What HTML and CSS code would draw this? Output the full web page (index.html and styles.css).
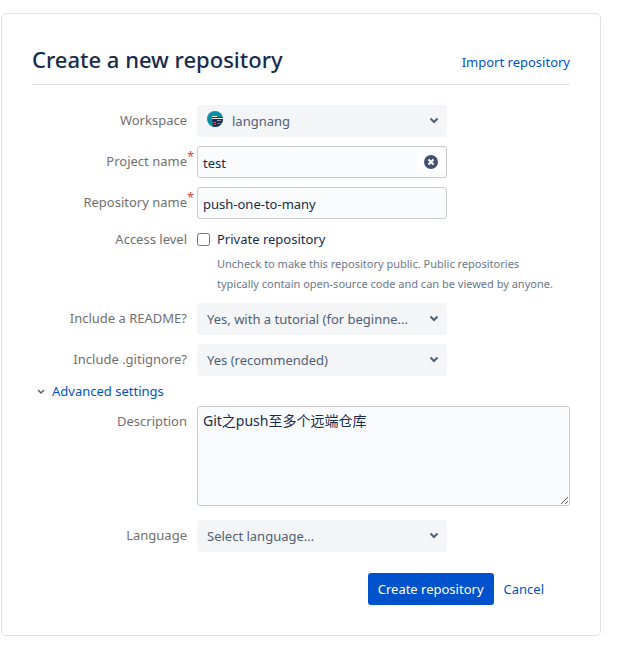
FILE: index.html
```html
<!DOCTYPE html>
<html lang="en">
<head>
<meta charset="utf-8">
<meta name="viewport" content="width=device-width, initial-scale=1">
<title>Create a new repository</title>
<link rel="stylesheet" href="styles.css">
</head>
<body>
<main class="card">
  <header class="card-header">
    <h1>Create a new repository</h1>
    <a href="#import">Import repository</a>
  </header>
  <form class="form">
    <div class="row">
      <label class="row-label" for="workspace">Workspace</label>
      <div class="control">
        <select id="workspace" class="select has-avatar"><option>langnang</option></select>
        <svg class="avatar" viewBox="0 0 16 16" aria-hidden="true">
          <clipPath id="round"><circle cx="8" cy="8" r="8"/></clipPath>
          <g clip-path="url(#round)">
            <path fill="#0891a5" d="M0 0h16v16H0z"/>
            <path fill="#1d2b4f" d="M5 6h11v10H6z"/>
            <path fill="#f3ead8" d="M5 5h5v1H5z"/>
            <path fill="#e9f0f5" d="M5 7h11v1H5z"/>
            <path fill="#8fa3bd" d="M10 9h4v1h-4z"/>
            <path fill="#d9546a" d="M6 11h3v1H6zM7 13h2v1H7z"/>
            <path fill="#5e7896" d="M10 12h4v1h-4z"/>
          </g>
        </svg>
        <svg class="chevron" viewBox="0 0 10 10" aria-hidden="true"><path d="M1.500 3.500 5 7 8.500 3.500"/></svg>
      </div>
    </div>
    <div class="row">
      <label class="row-label required" for="project">Project name</label>
      <div class="control">
        <input id="project" class="field" type="text" value="test">
        <button class="clear" type="button" aria-label="Clear project name">
          <svg viewBox="0 0 14 14" aria-hidden="true"><circle cx="7" cy="7" r="7"/><path d="m4.500 4.500 5 5m0-5-5 5"/></svg>
        </button>
      </div>
    </div>
    <div class="row">
      <label class="row-label required" for="repository">Repository name</label>
      <div class="control">
        <input id="repository" class="field" type="text" value="push-one-to-many">
      </div>
    </div>
    <div class="row row-access" role="group" aria-labelledby="access">
      <span class="row-label" id="access">Access level</span>
      <div class="access">
        <label class="check"><input type="checkbox">Private repository</label>
        <p class="hint">Uncheck to make this repository public. Public repositories<br>typically contain open-source code and can be viewed by anyone.</p>
      </div>
    </div>
    <div class="row">
      <label class="row-label" for="readme">Include a README?</label>
      <div class="control">
        <select id="readme" class="select"><option>Yes, with a tutorial (for beginne...</option></select>
        <svg class="chevron" viewBox="0 0 10 10" aria-hidden="true"><path d="M1.500 3.500 5 7 8.500 3.500"/></svg>
      </div>
    </div>
    <div class="row">
      <label class="row-label" for="gitignore">Include .gitignore?</label>
      <div class="control">
        <select id="gitignore" class="select"><option>Yes (recommended)</option></select>
        <svg class="chevron" viewBox="0 0 10 10" aria-hidden="true"><path d="M1.500 3.500 5 7 8.500 3.500"/></svg>
      </div>
    </div>
    <button class="advanced" type="button" aria-expanded="true">
      <svg viewBox="0 0 10 10" aria-hidden="true"><path d="M2 4 5 7 8 4"/></svg>Advanced settings
    </button>
    <div class="row row-description">
      <label class="row-label" for="description">Description</label>
      <textarea id="description" class="field area">Git之push至多个远端仓库</textarea>
    </div>
    <div class="row row-language">
      <label class="row-label" for="language">Language</label>
      <div class="control">
        <select id="language" class="select"><option>Select language...</option></select>
        <svg class="chevron" viewBox="0 0 10 10" aria-hidden="true"><path d="M1.500 3.500 5 7 8.500 3.500"/></svg>
      </div>
    </div>
    <div class="actions">
      <button class="primary" type="submit">Create repository</button>
      <a href="#cancel">Cancel</a>
    </div>
  </form>
</main>
</body>
</html>
```
FILE: styles.css
```css
* {
  box-sizing: border-box;
}

body {
  margin: 0;
  background: #fff;
  color: #172b4d;
  font: 13px/20px "Noto Sans", "Noto Sans CJK SC", sans-serif;
}

button,
input,
select,
textarea {
  margin: 0;
  color: inherit;
  font: inherit;
}

a {
  color: #0052cc;
  text-decoration: none;
}

.card {
  max-width: 600px;
  margin: 13px 1px 0;
  padding: 30px;
  border: 1px solid #dfe1e5;
  border-radius: 5px;
}

.card-header {
  display: flex;
  align-items: center;
  justify-content: space-between;
  padding-bottom: 10px;
  border-bottom: 1px solid #dfe1e5;
}

h1 {
  margin: 0;
  font-size: 22px;
  font-weight: 500;
  line-height: 30px;
}

.card-header a {
  padding-top: 6px;
}

.form {
  padding-top: 20px;
}

.row {
  display: grid;
  grid-template-columns: 155px 1fr;
  column-gap: 10px;
}

.row + .row {
  margin-top: 9px;
}

.row-label {
  position: relative;
  padding-top: 5px;
  color: #707070;
  text-align: right;
}

.required::after {
  content: "*";
  position: absolute;
  top: 0;
  left: 100%;
  color: #d04437;
}

.control {
  position: relative;
  width: 250px;
  max-width: 100%;
}

.select,
.field {
  display: block;
  width: 100%;
  height: 32px;
  border-radius: 3px;
}

.select {
  padding: 0 30px 0 10px;
  border: 0;
  appearance: none;
  background: #f4f5f7;
  color: #505f79;
  text-overflow: ellipsis;
}

.has-avatar {
  padding-left: 35px;
}

.field {
  padding: 2px 5px 0;
  border: 1px solid #ccc;
  background: #fafbfc;
}

.avatar {
  position: absolute;
  top: 6px;
  left: 10px;
  width: 16px;
  height: 16px;
}

.chevron {
  position: absolute;
  top: 10px;
  right: 8px;
  width: 10px;
  height: 10px;
  fill: none;
  stroke: #505f79;
  stroke-width: 2;
  pointer-events: none;
}

.clear {
  position: absolute;
  top: 7px;
  right: 2px;
  display: flex;
  align-items: center;
  justify-content: center;
  width: 28px;
  height: 18px;
  padding: 0;
  border: 0;
  background: #fff;
}

.clear svg {
  width: 14px;
  height: 14px;
  fill: #42526e;
}

.clear path {
  stroke: #fff;
  stroke-width: 2;
}

.row-access .row-label,
.access {
  padding-top: 1px;
}

.check {
  display: flex;
  align-items: center;
  gap: 7px;
}

.check input {
  width: 13px;
  height: 13px;
}

.hint {
  margin: 5px 0 0 20px;
  color: #6b778c;
  font-size: 11px;
}

.advanced {
  display: flex;
  align-items: center;
  gap: 6px;
  margin: 5px 0;
  padding: 0 4px;
  border: 0;
  background: none;
  color: #0052cc;
}

.advanced svg {
  width: 10px;
  height: 10px;
  fill: none;
  stroke: #505f79;
  stroke-width: 1.5;
}

.area {
  height: 100px;
  padding: 4px 5px;
  font-size: 14px;
  resize: both;
}

.row + .row-language {
  margin-top: 14px;
}

.actions {
  display: flex;
  align-items: center;
  justify-content: flex-end;
  gap: 10px;
  margin-top: 21px;
  padding-right: 26px;
}

.primary {
  height: 32px;
  padding: 0 10px;
  border: 0;
  border-radius: 3px;
  background: #0052cc;
  color: #fff;
}
```
